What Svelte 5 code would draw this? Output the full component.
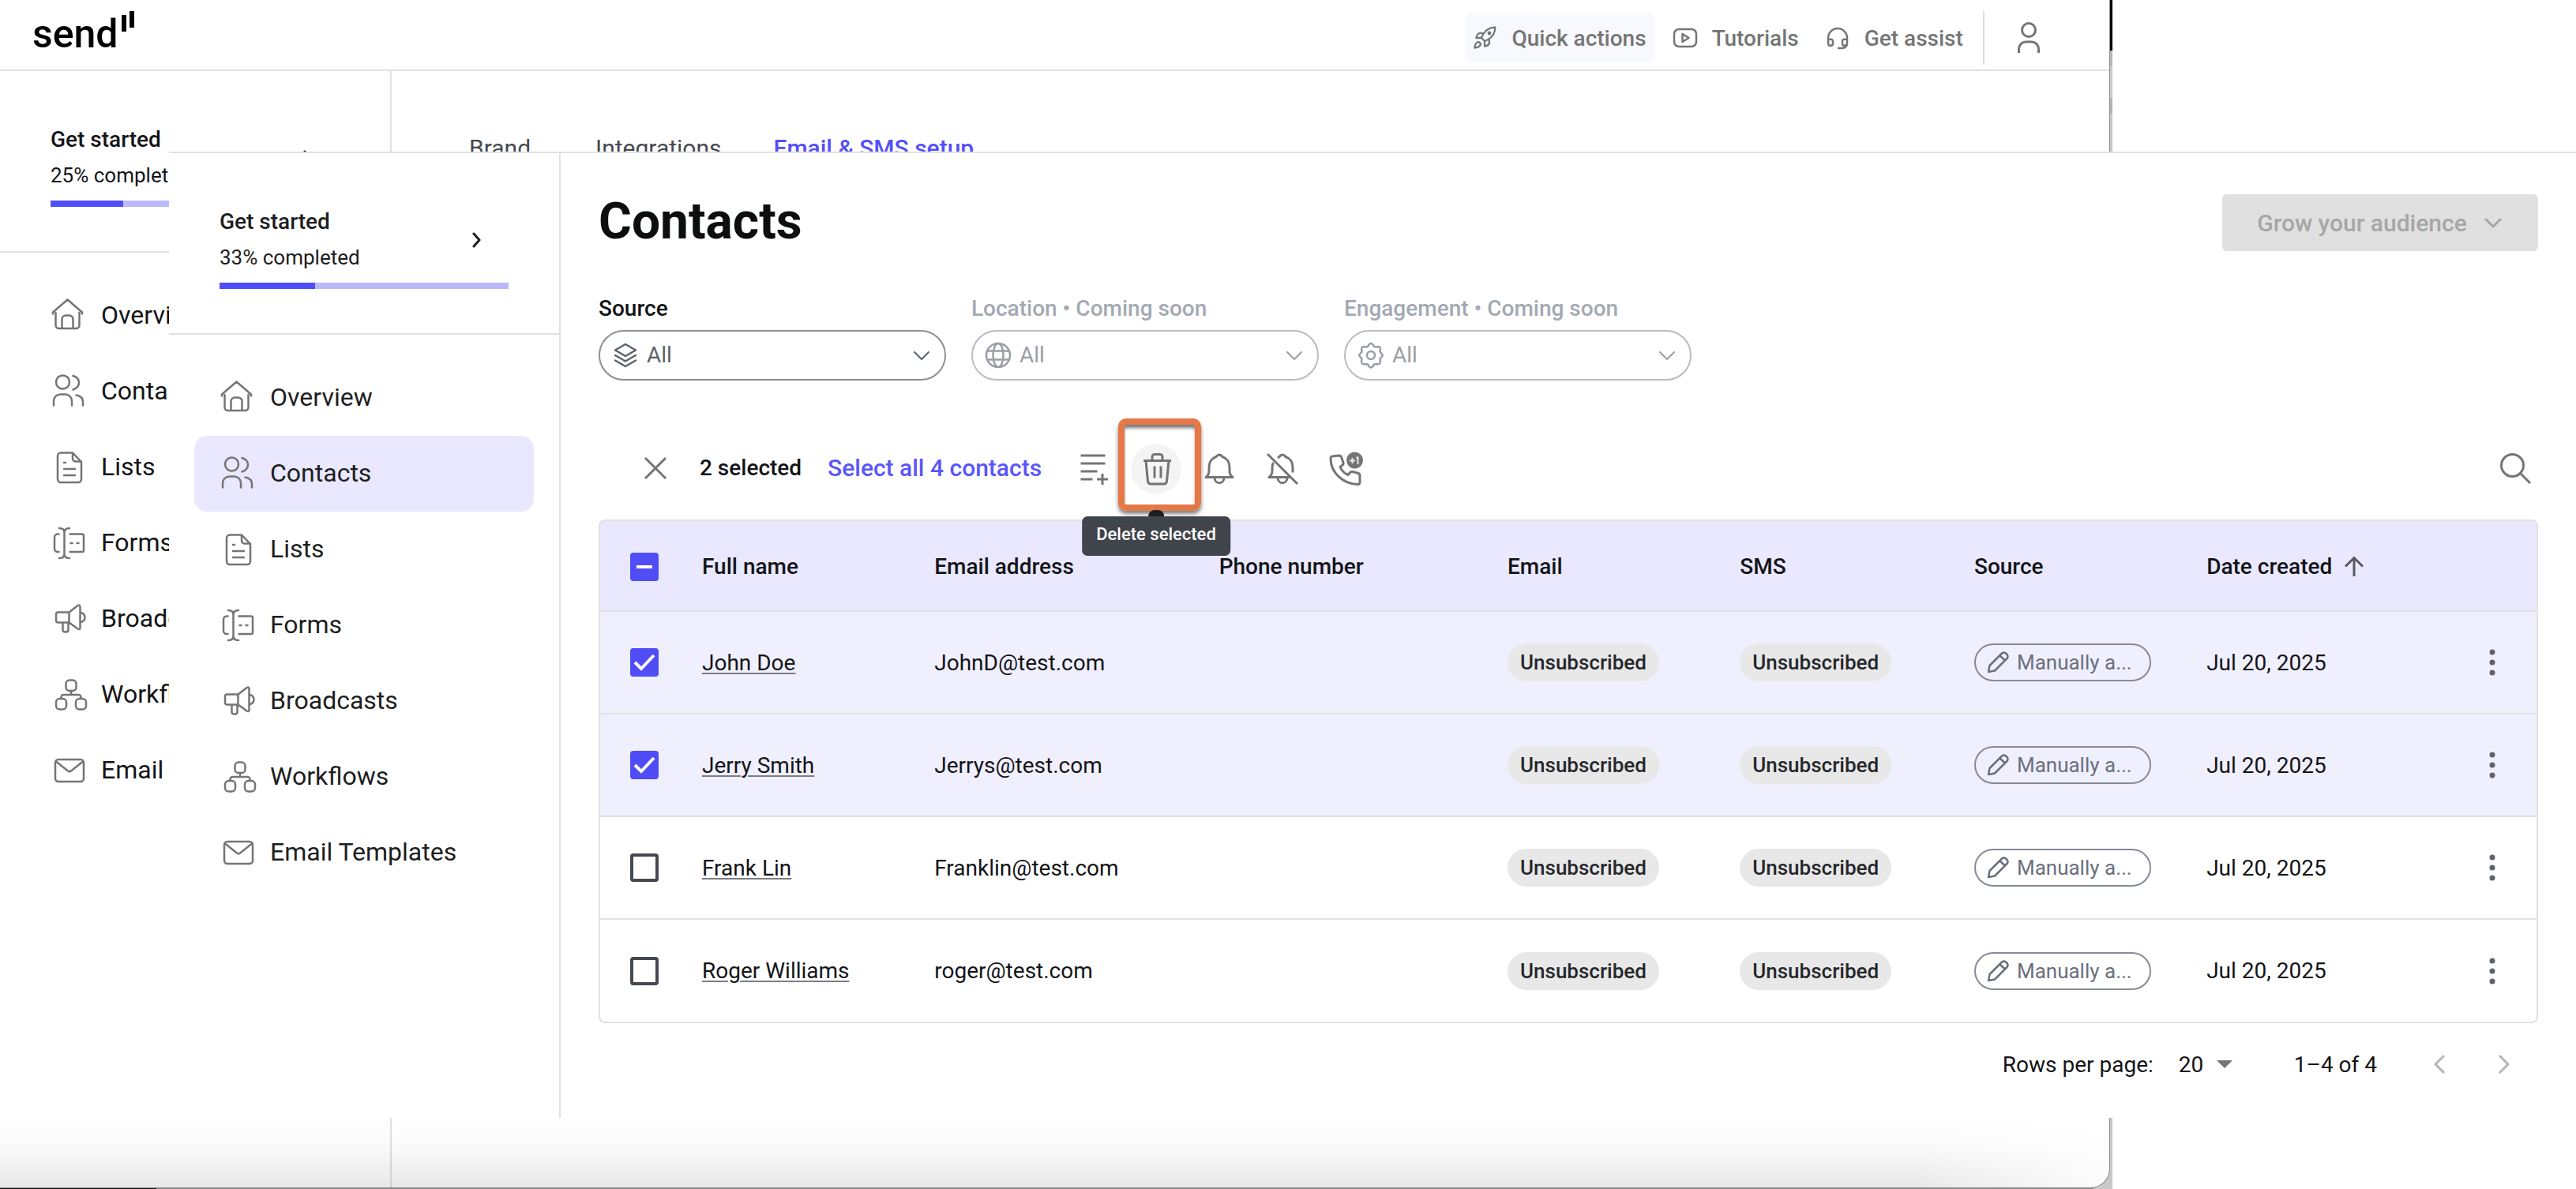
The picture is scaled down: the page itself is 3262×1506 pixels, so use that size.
<script>
  let contacts = $state([
    { name: 'John Doe', email: 'JohnD@test.com', selected: true },
    { name: 'Jerry Smith', email: 'Jerrys@test.com', selected: true },
    { name: 'Frank Lin', email: 'Franklin@test.com', selected: false },
    { name: 'Roger Williams', email: 'roger@test.com', selected: false },
  ]);

  const navItems = [
    { label: 'Overview', icon: 'home' },
    { label: 'Contacts', icon: 'people' },
    { label: 'Lists', icon: 'list' },
    { label: 'Forms', icon: 'form' },
    { label: 'Broadcasts', icon: 'horn' },
    { label: 'Workflows', icon: 'flow' },
    { label: 'Email Templates', icon: 'mail' },
  ];

  let count = $derived(contacts.filter((c) => c.selected).length);
  let all = $derived(count === contacts.length);

  function setAll(value) {
    contacts.forEach((c) => (c.selected = value));
  }
</script>

{#snippet navIcon(name)}
  <svg class="nav-icon" viewBox="0 0 48 48" aria-hidden="true">
    {#if name === 'home'}
      <path d="M3 21.5v-2L21.5 3.500L40 19.500v2M6.500 20v16a4 4 0 0 0 4 4h22a4 4 0 0 0 4-4V20M14.500 40V28.500a5 5 0 0 1 5-5h4a5 5 0 0 1 5 5V40" />
    {:else if name === 'people'}
      <circle cx="15.500" cy="12" r="8.500" />
      <path d="M28.500 4c10 3 10 14 0 17.500M4 41.500V36a8.500 8.500 0 0 1 8.500-8.500h6A8.500 8.500 0 0 1 27 36v5.500M32.500 28.500c5.500 1 8.500 4 8.500 8.500v4.500" />
    {:else if name === 'list'}
      <path d="M13 5.500h15L39 17v22a4 4 0 0 1-4 4H13a4 4 0 0 1-4-4V9.500a4 4 0 0 1 4-4zM28 5.500V13a3.500 3.500 0 0 0 3.500 3.500H39M17 18h2M17 26h14M17 34h14" />
    {:else if name === 'form'}
      <path d="M10.500 12.500H9a4 4 0 0 0-4 4V31a4 4 0 0 0 4 4h1.500M24.500 12.500H40a2 2 0 0 1 2 2V33a2 2 0 0 1-2 2H24.500M17.500 10v28M11 5c4 0 6.500 2 6.500 5.500C17.500 7 20 5 24 5M11 43c4 0 6.500-2 6.500-5.500C17.500 41 20 43 24 43M25.500 24h2M33.500 24h2" />
    {:else if name === 'horn'}
      <path d="M23.500 15.500H9.500a2.500 2.500 0 0 0-2.500 2.500v8a2.500 2.500 0 0 0 2.500 2.500h14zM23.500 15.500l11-8.500q3-1.500 3 2v26q0 3-3 1.500l-11-8M37.500 15.500c8 2 8 11 0 13M15.500 28.500v9.500q0 2.500 3.500 2.500t3.500-2.500v-9.500" />
    {:else if name === 'flow'}
      <rect x="19.500" y="5.500" width="13" height="13.500" rx="4.500" />
      <rect x="7" y="29" width="13" height="13.500" rx="4.500" />
      <rect x="32" y="29" width="13" height="13.500" rx="4.500" />
      <path d="M26 19v5M13.500 29v-2a3 3 0 0 1 3-3h19a3 3 0 0 1 3 3v2" />
    {:else}
      <rect x="6" y="10" width="36" height="28" rx="4" />
      <path d="M7 12.500l15 12q2 1.500 4 0l15-12" />
    {/if}
  </svg>
{/snippet}

{#snippet sidebar(percent, active)}
  <aside class="sidebar">
    <section class="progress-card">
      <div class="progress-head">
        <div>
          <div class="progress-title">Get started</div>
          <div class="progress-sub">{percent}% completed</div>
        </div>
        <svg class="progress-arrow" viewBox="0 0 24 24" aria-hidden="true"><path d="M8 6l7 8-7 8" /></svg>
      </div>
      <div class="bar"><div class="bar-fill" style="width: {percent}%"></div></div>
    </section>
    <nav>
      {#each navItems as item}
        <a href="#{item.icon}" class="nav-item" class:active={item.label === active}>
          {@render navIcon(item.icon)}
          <span>{item.label}</span>
        </a>
      {/each}
    </nav>
  </aside>
{/snippet}

{#snippet chevron()}
  <svg class="chevron" viewBox="0 0 24 24" aria-hidden="true"><path d="M2 8l9 9 9-9" /></svg>
{/snippet}

<div class="desktop">
  <div class="back-frame">
    <div class="back-window">
      <header class="topbar">
        <a class="logo" href="#top" aria-label="send">
          <span>send</span>
          <svg viewBox="0 0 18 28" aria-hidden="true"><rect x="1" y="5" width="6" height="21" /><rect x="11" y="0" width="6" height="21" /></svg>
        </a>
        <div class="top-actions">
          <button class="top-btn quick">
            <svg class="top-icon" viewBox="0 0 24 24" aria-hidden="true">
              <path d="M4.500 16.500c-1.500 1.260-2 5-2 5s3.740-.5 5-2c.71-.84.7-2.130-.09-2.910a2.180 2.180 0 0 0-2.910-.09zM12 15l-3-3a22 22 0 0 1 2-3.950A12.880 12.880 0 0 1 22 2c0 2.720-.78 7.500-6 11a22.350 22.350 0 0 1-4 2zM9 12H4s.55-3.030 2-4c1.620-1.080 5 0 5 0M12 15v5s3.030-.55 4-2c1.080-1.620 0-5 0-5" />
              <circle cx="16.500" cy="7.500" r="1" />
            </svg>
            Quick actions
          </button>
          <button class="top-btn">
            <svg class="top-icon" viewBox="0 0 32 32" aria-hidden="true"><rect x="2" y="5" width="28" height="22" rx="6" /><path d="M12.500 11v10l8-5z" /></svg>
            Tutorials
          </button>
          <button class="top-btn">
            <svg class="top-icon" viewBox="0 0 32 32" aria-hidden="true"><path d="M4 20v-4a12 12 0 0 1 24 0v7a6 6 0 0 1-6 6h-5M4 18q6-1 6 2v3q0 3-3 3t-3-4zM28 18q-6-1-6 2v3q0 3 3 3t3-4z" /></svg>
            Get assist
          </button>
          <span class="divider"></span>
          <button class="user" aria-label="Account">
            <svg viewBox="0 0 48 48" aria-hidden="true"><circle cx="24" cy="14" r="8.500" /><path d="M11.500 43v-5a9 9 0 0 1 9-9h7a9 9 0 0 1 9 9v5" /></svg>
          </button>
        </div>
      </header>
      <div class="shell">
        {@render sidebar(25, '')}
        <div class="tabs">
          <a href="#brand">Brand</a>
          <a href="#integrations">Integrations</a>
          <a href="#setup" class="current">Email &amp; SMS setup</a>
        </div>
      </div>
    </div>
  </div>

  <div class="front-window">
    {@render sidebar(33, 'Contacts')}
    <main>
      <div class="title-row">
        <h1>Contacts</h1>
        <button class="grow" disabled>Grow your audience {@render chevron()}</button>
      </div>

      <div class="filters">
        <div class="filter">
          <label for="source">Source</label>
          <div class="select-box">
            <svg class="select-icon" viewBox="0 0 36 36" aria-hidden="true"><path d="M18 4l13 7.500L18 19 5 11.500zM5 18l13 7.500L31 18M5 24.500L18 32l13-7.500" /></svg>
            <select id="source"><option>All</option></select>
            {@render chevron()}
          </div>
        </div>
        <div class="filter off">
          <label for="location">Location • Coming soon</label>
          <div class="select-box">
            <svg class="select-icon" viewBox="0 0 36 36" aria-hidden="true"><circle cx="18" cy="18" r="15" /><ellipse cx="18" cy="18" rx="6.500" ry="15" /><path d="M4.500 12.500h27M4.500 23.500h27" /></svg>
            <select id="location" disabled><option>All</option></select>
            {@render chevron()}
          </div>
        </div>
        <div class="filter off">
          <label for="engagement">Engagement • Coming soon</label>
          <div class="select-box">
            <svg class="select-icon" viewBox="0 0 36 36" aria-hidden="true"><path d="M15.500 4.500q2.500-3 5 0l1.500 2.500 3 .5q5-1.500 5 2.500l-.5 3.500 2 2.500q2.500 2 0 4l-2 2.500.5 3.500q0 4-5 3l-3 .5-1.500 2.500q-2.500 3-5 0l-1.500-2.500-3-.5q-5 1-5-3l.5-3.500-2-2.500q-2.500-2 0-4l2-2.500L6 10q0-4 5-2.500l3-.5z" /><circle cx="18" cy="18" r="5" /></svg>
            <select id="engagement" disabled><option>All</option></select>
            {@render chevron()}
          </div>
        </div>
      </div>

      <div class="toolbar">
        <button class="tool" aria-label="Clear selection" onclick={() => setAll(false)}>
          <svg viewBox="0 0 48 48" aria-hidden="true"><path d="M11 10l26 26M37 10L11 36" /></svg>
        </button>
        <span class="count">{count} selected</span>
        <button class="select-all" onclick={() => setAll(true)}>Select all {contacts.length} contacts</button>
        <div class="tools">
          <button class="tool" aria-label="Add to list">
            <svg viewBox="0 0 48 48" aria-hidden="true"><path d="M8.500 7h31M8.500 17h31M8.500 27h21M8.500 37h15M29 37h14M36 30v14" /></svg>
          </button>
          <div class="tool-slot">
            <button class="tool hovered" aria-label="Delete selected">
              <svg viewBox="0 0 48 48" aria-hidden="true"><path d="M8 13.500h35M19 13.500V8.500a3 3 0 0 1 3-3h7a3 3 0 0 1 3 3v5M11 13.500l2.500 26a4 4 0 0 0 4 3.500h16a4 4 0 0 0 4-3.500l2.500-26M22 20.500v15M30 20.500v15" /></svg>
            </button>
            <span class="tooltip" role="tooltip">Delete selected</span>
            <span class="highlight"></span>
          </div>
          <button class="tool" aria-label="Subscribe">
            <svg viewBox="0 0 48 48" aria-hidden="true"><path d="M7 34.500h34q-4-3-4-8v-4c0-9-4-12-9-14q-4-5-8 0c-5 2-9 5-9 14v4q0 5-4 8zM18 35c0 9 12 9 12 0" /></svg>
          </button>
          <button class="tool" aria-label="Unsubscribe">
            <svg viewBox="0 0 48 48" aria-hidden="true"><path d="M12.500 16q-1.500 3-1.500 6.500v4q0 5-4 8h26M18 10l2-1.500q4-5 8 0c5 2 9 5 9 14v6M18 35c0 9 12 9 12 0M5 5l38 38" /></svg>
          </button>
          <button class="tool" aria-label="Phone consent">
            <svg viewBox="0 0 48 48" aria-hidden="true">
              <path d="M7 8l8-1q3 0 3.500 2l2.500 7q.5 2-1.500 3.500l-2.500 2q3 7 10 10l2-2.500q1.500-2 4-1.500l7 2q2 .5 2 3v8q0 3-3 3C20 43 5 28 5 11q0-3 2-3z" />
              <circle class="badge-fill" cx="35.500" cy="13" r="10.500" />
              <path class="badge-mark" d="M29 13.500h7M32.500 10v7M37.500 10.500l2-1.500v9" />
            </svg>
          </button>
        </div>
        <button class="tool search" aria-label="Search">
          <svg viewBox="0 0 48 48" aria-hidden="true"><circle cx="23.500" cy="19.500" r="14" /><path d="M33.500 29.500L46 42" /></svg>
        </button>
      </div>

      <div class="table-wrap">
        <table>
          <colgroup>
            <col class="c-check" /><col class="c-std" /><col class="c-mail" /><col class="c-phone" />
            <col class="c-std" /><col class="c-sms" /><col class="c-std" /><col />
          </colgroup>
          <thead>
            <tr>
              <th class="check-cell">
                <label class="check">
                  <input type="checkbox" class:filled={count > 0} aria-label="Select all rows" indeterminate={count > 0 && !all} checked={all} onchange={(e) => setAll(e.currentTarget.checked)} />
                  {#if all}
                    <svg viewBox="0 0 36 36" aria-hidden="true"><path d="M6 18l8 8L30 9" /></svg>
                  {:else if count > 0}
                    <svg viewBox="0 0 36 36" aria-hidden="true"><path d="M8 18h20" /></svg>
                  {/if}
                </label>
              </th>
              <th>Full name</th>
              <th>Email address</th>
              <th>Phone number</th>
              <th>Email</th>
              <th>SMS</th>
              <th>Source</th>
              <th>
                <span class="sorted">Date created <svg viewBox="0 0 28 28" aria-hidden="true"><path d="M14 26V3M3 13.500L14 2.500l11 11" /></svg></span>
              </th>
            </tr>
          </thead>
          <tbody>
            {#each contacts as contact}
              <tr class:selected={contact.selected}>
                <td class="check-cell">
                  <label class="check">
                    <input type="checkbox" class:filled={contact.selected} aria-label="Select {contact.name}" bind:checked={contact.selected} />
                    {#if contact.selected}
                      <svg viewBox="0 0 36 36" aria-hidden="true"><path d="M6 18l8 8L30 9" /></svg>
                    {/if}
                  </label>
                </td>
                <td><a class="name" href="#contact">{contact.name}</a></td>
                <td>{contact.email}</td>
                <td></td>
                <td><span class="chip">Unsubscribed</span></td>
                <td><span class="chip">Unsubscribed</span></td>
                <td>
                  <span class="source-chip">
                    <svg viewBox="0 0 30 30" aria-hidden="true"><path d="M3 27l1.500-8L20 3.500q2.500-2 5 0l1.500 1.500q2 2.500 0 5L11 25.500zM17.500 6.500l6.500 6" /></svg>
                    <span>Manually a...</span>
                  </span>
                </td>
                <td>
                  <div class="date-cell">
                    Jul 20, 2025
                    <button class="more" aria-label="More options for {contact.name}">
                      <svg viewBox="0 0 48 48" aria-hidden="true"><circle cx="24" cy="11" r="3.500" /><circle cx="24" cy="24" r="3.500" /><circle cx="24" cy="37" r="3.500" /></svg>
                    </button>
                  </div>
                </td>
              </tr>
            {/each}
          </tbody>
        </table>
      </div>

      <div class="pagination">
        <label for="rows">Rows per page:</label>
        <div class="rows-box">
          <select id="rows"><option>20</option></select>
          <svg viewBox="0 0 20 10" aria-hidden="true"><path d="M0 0h20L10 10z" /></svg>
        </div>
        <span class="range">1–4 of 4</span>
        <button class="page-btn" aria-label="Previous page" disabled>
          <svg viewBox="0 0 48 48" aria-hidden="true"><path d="M29 13L18 24l11 11" /></svg>
        </button>
        <button class="page-btn" aria-label="Next page" disabled>
          <svg viewBox="0 0 48 48" aria-hidden="true"><path d="M19 13l11 11-11 11" /></svg>
        </button>
      </div>
    </main>
  </div>
</div>

<style>
  :global(body) {
    background: #fff;
    font-family: Roboto, 'Liberation Sans', sans-serif;
    font-size: 28px;
    color: #131417;
  }
  * {
    box-sizing: border-box;
  }
  button,
  select {
    font: inherit;
    color: inherit;
    background: none;
    border: 0;
    padding: 0;
    margin: 0;
    opacity: 1;
  }
  a {
    color: inherit;
    text-decoration: none;
  }
  svg {
    display: block;
    fill: none;
    stroke: currentColor;
    stroke-linecap: round;
    stroke-linejoin: round;
    flex: none;
  }

  /* Two overlapping windows share one grid cell */
  .desktop {
    display: grid;
    min-height: 100vh;
  }
  .back-frame,
  .front-window {
    grid-area: 1 / 1;
  }
  .back-frame {
    display: grid;
    width: 82%;
    height: 100%;
    overflow: hidden;
    padding: 0 4px 2px 0;
    background:
      linear-gradient(to right, #111 198px, #8c8c8c 198px, #8c8c8c calc(100% - 24px), #c9c9c9 calc(100% - 24px)) bottom / 100% 2px no-repeat,
      linear-gradient(#000 64px, #b3b8bd 64px, #b3b8bd 84px, #cbcbcb 84px, #cbcbcb 124px, #aeb4b9 124px, #aeb4b9 144px, #c9c9c9 144px);
  }
  .back-window {
    position: relative;
    display: flex;
    flex-direction: column;
    min-width: 0;
    background: #fff;
    border-radius: 0 0 24px 0;
    box-shadow: 0 0 0 1px #8a8a8a;
  }
  .back-window::after {
    content: '';
    position: absolute;
    inset: auto 0 0 0;
    height: 88px;
    border-radius: 0 0 24px 0;
    background: linear-gradient(rgba(0, 0, 0, 0), rgba(0, 0, 0, 0.02) 40%, rgba(0, 0, 0, 0.09));
    mask-image: linear-gradient(to left, rgba(0, 0, 0, 0.15), #000 240px);
    pointer-events: none;
  }
  .topbar {
    display: flex;
    justify-content: space-between;
    align-items: center;
    height: 90px;
    padding: 0 78px 0 41px;
    border-bottom: 2px solid #e1e1e1;
  }
  .logo {
    display: flex;
    align-items: flex-start;
    height: 60px;
    color: #000;
    font-size: 50px;
    font-weight: 500;
    line-height: 58px;
  }
  .logo svg {
    width: 18px;
    height: 28px;
    margin-left: 3px;
    fill: #000;
    stroke: none;
  }
  .top-actions {
    display: flex;
    align-items: center;
    padding-top: 8px;
    color: #757575;
    font-size: 28px;
    font-weight: 500;
  }
  .top-btn {
    display: flex;
    align-items: center;
    gap: 18px;
    height: 62px;
    padding: 0 10px 0 8px;
    margin-right: 15px;
    border-radius: 8px;
  }
  .quick {
    background: #f8f9ff;
  }
  .top-icon {
    width: 32px;
    height: 32px;
    stroke-width: 2.5;
  }
  .quick .top-icon {
    stroke-width: 1.7;
  }
  .divider {
    width: 2px;
    height: 68px;
    margin-right: 32px;
    background: #dedede;
  }
  .user svg {
    width: 48px;
    height: 48px;
    stroke-width: 3;
    stroke-linecap: butt;
  }
  .shell {
    display: flex;
    flex: 1;
  }
  .tabs {
    display: flex;
    align-items: flex-start;
    gap: 66px;
    padding: 80px 98px;
    font-size: 30px;
    line-height: 36px;
    color: #46494f;
  }
  .tabs a {
    min-width: 94px;
  }
  .tabs .current {
    color: #524ff8;
    font-weight: 500;
  }

  .sidebar {
    flex: none;
    width: 496px;
    border-right: 2px solid #e1e1e1;
  }
  .progress-card {
    padding: 66px 64px 56px;
    border-bottom: 2px solid #e1e1e1;
  }
  .progress-head {
    display: flex;
    justify-content: space-between;
    align-items: center;
    margin-bottom: 14px;
  }
  .progress-title {
    font-weight: 500;
    line-height: 42px;
    margin-bottom: 8px;
  }
  .progress-sub {
    padding-bottom: 2px;
    font-size: 26px;
    line-height: 32px;
  }
  .progress-arrow {
    width: 24px;
    height: 24px;
    margin-right: 28px;
    stroke-width: 3;
  }
  .bar {
    height: 8px;
    background: #bcb9fb;
  }
  .bar-fill {
    height: 100%;
    background: #504df7;
  }
  nav {
    padding: 32px;
  }
  .nav-item {
    display: flex;
    align-items: center;
    gap: 16px;
    height: 96px;
    padding: 0 32px;
    border-radius: 16px;
    font-size: 32px;
    line-height: 40px;
    white-space: nowrap;
  }
  .nav-item span {
    padding-bottom: 2px;
  }
  .nav-item.active {
    background: #eae8fe;
  }
  .nav-icon {
    width: 48px;
    height: 48px;
    color: #757575;
    stroke-width: 2.5;
  }

  .front-window {
    display: flex;
    align-self: start;
    z-index: 1;
    margin: 192px 0 90px 214px;
    background: #fff;
    border-top: 2px solid #e1e1e1;
  }
  .front-window .progress-card,
  .front-window .nav-item {
    color: #1d1e21;
  }
  main {
    flex: 1;
    min-width: 0;
    padding: 48px 48px 36px;
  }
  .title-row {
    display: flex;
    justify-content: space-between;
    align-items: flex-end;
    height: 76px;
  }
  h1 {
    margin: 0;
    font-size: 64px;
    font-weight: 700;
    line-height: 74px;
    color: #0d0e10;
  }
  .grow {
    display: flex;
    align-items: center;
    justify-content: center;
    gap: 22px;
    width: 400px;
    height: 72px;
    border-radius: 6px;
    background: #e0e0e0;
    color: #a6a6a6;
    font-size: 30px;
    font-weight: 500;
  }
  .chevron {
    width: 24px;
    height: 24px;
    stroke-width: 2;
  }
  .grow .chevron {
    stroke-width: 3;
  }
  .filters {
    display: flex;
    gap: 32px;
    margin-top: 56px;
  }
  .filter {
    flex: 0 1 440px;
  }
  .filter label {
    display: block;
    margin-bottom: 10px;
    line-height: 34px;
    font-weight: 500;
  }
  .select-box {
    display: flex;
    align-items: center;
    gap: 9px;
    height: 64px;
    padding: 0 16px 0 14px;
    border: 2px solid #8b9097;
    border-radius: 32px;
    color: #5b626c;
  }
  .select-icon {
    width: 36px;
    height: 36px;
    stroke-width: 2.5;
  }
  .select-box select {
    flex: 1;
    appearance: none;
    line-height: 40px;
    outline: 0;
  }
  .off label {
    color: #a3a9b3;
  }
  .off .select-box {
    border-color: #b9bbc1;
    color: #9a9ea5;
  }

  .toolbar {
    display: flex;
    align-items: center;
    margin-top: 80px;
    padding-left: 40px;
  }
  .tool {
    display: grid;
    place-items: center;
    width: 64px;
    height: 64px;
    border-radius: 50%;
    color: #757575;
  }
  .tool svg {
    width: 48px;
    height: 48px;
    stroke-width: 3;
    stroke-linecap: butt;
  }
  .hovered {
    background: #f4f4f4;
  }
  .count {
    min-width: 186px;
    padding: 0 0 4px 24px;
    font-weight: 500;
  }
  .select-all {
    min-width: 304px;
    padding-bottom: 4px;
    color: #5a56fa;
    font-size: 30px;
    font-weight: 500;
    text-align: left;
  }
  .tools {
    display: flex;
    gap: 16px;
  }
  .search {
    margin-left: auto;
  }
  .tool-slot {
    position: relative;
  }
  .highlight {
    position: absolute;
    inset: -32px -25px -21px -16px;
    border: 8px solid #e67847;
    border-radius: 10px;
    box-shadow:
      0 4px 5px rgba(0, 0, 0, 0.5),
      inset 0 5px 4px -1px rgba(0, 0, 0, 0.55);
    pointer-events: none;
  }
  .tooltip {
    position: absolute;
    top: 92px;
    left: 50%;
    transform: translateX(-50%);
    z-index: 1;
    padding: 0 18px 4px;
    border-radius: 7px;
    background: #40444b;
    color: #fff;
    font-size: 22px;
    font-weight: 500;
    line-height: 46px;
    white-space: nowrap;
  }
  .tooltip::before {
    content: '';
    position: absolute;
    left: 50%;
    bottom: 100%;
    width: 20px;
    height: 8px;
    margin-left: -10px;
    border-radius: 10px 10px 0 0;
    background: #1c1e21;
  }
  .badge-fill {
    fill: #757575;
    stroke: none;
  }
  .badge-mark {
    stroke: #e8e8e8;
    stroke-width: 2;
  }

  .table-wrap {
    margin-top: 32px;
    border: 2px solid #e1e1e1;
    border-radius: 8px;
    overflow: hidden;
  }
  table {
    width: 100%;
    table-layout: fixed;
    border-collapse: collapse;
  }
  .c-check {
    width: 128px;
  }
  .c-std {
    width: 12%;
  }
  .c-sms {
    width: 12.1%;
  }
  .c-mail {
    width: 14.7%;
  }
  .c-phone {
    width: 14.9%;
  }
  th,
  td {
    padding: 0 0 0 1px;
    text-align: left;
    white-space: nowrap;
  }
  th {
    height: 114px;
    padding-top: 2px;
    font-weight: 500;
    background: #eae8fe;
  }
  td {
    height: 130px;
    border-top: 2px solid #e1e1e1;
  }
  .selected td {
    background: #f0effe;
  }
  .check-cell {
    padding-left: 38px;
  }
  .check {
    display: grid;
    width: 36px;
    height: 36px;
  }
  .check input,
  .check svg {
    grid-area: 1 / 1;
    width: 36px;
    height: 36px;
  }
  .check input {
    appearance: none;
    margin: 0;
    border: 4px solid #454850;
    border-radius: 4px;
    background: #fff;
  }
  .check input.filled {
    border-color: #504df7;
    background: #504df7;
  }
  .check svg {
    color: #fff;
    stroke-width: 4;
    stroke-linecap: butt;
    stroke-linejoin: miter;
    pointer-events: none;
  }
  .sorted {
    display: flex;
    align-items: center;
    gap: 14px;
  }
  .sorted svg {
    width: 28px;
    height: 28px;
    color: #565960;
    stroke-width: 3;
    stroke-linecap: butt;
    stroke-linejoin: miter;
  }
  .name {
    text-decoration: underline;
    text-decoration-color: #7c7d82;
    text-decoration-thickness: 2px;
    text-underline-offset: 3px;
  }
  .chip {
    display: inline-block;
    padding: 0 16px;
    border-radius: 24px;
    background: #e8e8e8;
    color: #26272b;
    font-size: 26px;
    font-weight: 500;
    line-height: 48px;
    vertical-align: middle;
  }
  .source-chip {
    display: inline-flex;
    align-items: center;
    gap: 9px;
    width: 224px;
    height: 48px;
    padding-left: 13px;
    border: 2px solid #858b96;
    border-radius: 24px;
    color: #6a707c;
    font-size: 26px;
    vertical-align: middle;
  }
  .source-chip svg {
    width: 30px;
    height: 30px;
    stroke-width: 2.5;
  }
  .date-cell {
    display: flex;
    justify-content: space-between;
    align-items: center;
    padding-right: 32px;
  }
  .more svg {
    width: 48px;
    height: 48px;
    fill: #5d626c;
    stroke: none;
  }

  .pagination {
    display: flex;
    justify-content: flex-end;
    align-items: center;
    height: 64px;
    margin-top: 20px;
  }
  .rows-box {
    display: flex;
    align-items: center;
    margin: 0 78px 0 32px;
  }
  .rows-box select {
    appearance: none;
    width: 48px;
    outline: 0;
  }
  .rows-box svg {
    width: 20px;
    height: 10px;
    fill: #757575;
    stroke: none;
  }
  .range {
    margin-right: 56px;
  }
  .page-btn {
    color: #b5b5b5;
  }
  .page-btn + .page-btn {
    margin: 0 20px 0 32px;
  }
  .page-btn svg {
    width: 48px;
    height: 48px;
    stroke-width: 3;
    stroke-linecap: butt;
  }
</style>
